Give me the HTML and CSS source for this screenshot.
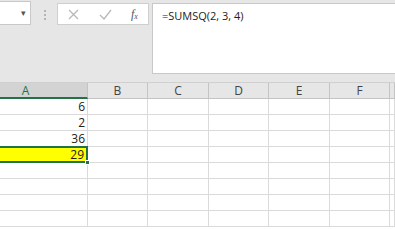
FILE: index.html
```html
<!DOCTYPE html>
<html lang="en">
<head>
  <meta charset="UTF-8">
  <title>SUMSQ</title>
  <link rel="stylesheet" href="styles.css">
</head>
<body>
<div class="toolbar">
  <div class="name-box"><span class="drop">&#9662;</span></div>
  <div class="grip"><i></i><i></i><i></i></div>
  <div class="fx-buttons">
    <svg class="btn-x" width="11" height="11" viewBox="0 0 11 11"><path d="M1 1L10 10M10 1L1 10" stroke="#b8b8b8" stroke-width="1.3" fill="none"/></svg>
    <svg class="btn-ok" width="13" height="11" viewBox="0 0 13 11"><path d="M1 6L5 10L12 1" stroke="#b8b8b8" stroke-width="1.3" fill="none"/></svg>
    <span class="fx">f<sub>x</sub></span>
  </div>
  <div class="formula">=SUMSQ(2, 3, 4)</div>
</div>

<div class="sheet">
  <div class="hdr active">A</div>
  <div class="hdr">B</div>
  <div class="hdr">C</div>
  <div class="hdr">D</div>
  <div class="hdr">E</div>
  <div class="hdr">F</div>
  <div class="hdr"></div>

  <div class="cell num">6</div><div class="cell"></div><div class="cell"></div><div class="cell"></div><div class="cell"></div><div class="cell"></div><div class="cell"></div>
  <div class="cell num">2</div><div class="cell"></div><div class="cell"></div><div class="cell"></div><div class="cell"></div><div class="cell"></div><div class="cell"></div>
  <div class="cell num">36</div><div class="cell"></div><div class="cell"></div><div class="cell"></div><div class="cell"></div><div class="cell"></div><div class="cell"></div>
  <div class="cell num selected">29<span class="handle"></span></div><div class="cell"></div><div class="cell"></div><div class="cell"></div><div class="cell"></div><div class="cell"></div><div class="cell"></div>
  <div class="cell"></div><div class="cell"></div><div class="cell"></div><div class="cell"></div><div class="cell"></div><div class="cell"></div><div class="cell"></div>
  <div class="cell"></div><div class="cell"></div><div class="cell"></div><div class="cell"></div><div class="cell"></div><div class="cell"></div><div class="cell"></div>
  <div class="cell"></div><div class="cell"></div><div class="cell"></div><div class="cell"></div><div class="cell"></div><div class="cell"></div><div class="cell"></div>
  <div class="cell"></div><div class="cell"></div><div class="cell"></div><div class="cell"></div><div class="cell"></div><div class="cell"></div><div class="cell"></div>
</div>
</body>
</html>
```

FILE: styles.css
```css
* {
  margin: 0;
  padding: 0;
  box-sizing: border-box;
}

body {
  font-family: "Open Sans", "Liberation Sans", sans-serif;
  background: #fff;
  overflow: hidden;
  width: 395px;
  height: 229px;
}

/* formula bar */
.toolbar {
  display: flex;
  align-items: flex-start;
  height: 83px;
  background: #e6e6e6;
  border-bottom: 1px solid #d0d0d0;
}

.name-box {
  width: 31px;
  height: 24px;
  margin-top: 1px;
  background: #fff;
  border: 1px solid #c8c8c8;
  border-left: none;
  position: relative;
}

.drop {
  position: absolute;
  right: 4px;
  top: 4px;
  font-size: 9px;
  color: #555;
}

.grip {
  display: flex;
  flex-direction: column;
  gap: 2px;
  margin: 10px 0 0 13px;
}

.grip i {
  display: block;
  width: 2px;
  height: 2px;
  background: #b4b4b4;
}

.fx-buttons {
  display: flex;
  align-items: center;
  width: 92px;
  height: 22px;
  margin: 3px 0 0 11px;
  background: #fff;
  border: 1px solid #cfcfcf;
}

.btn-x {
  margin-left: 10px;
}

.btn-ok {
  margin-left: 20px;
}

.fx {
  margin-left: 19px;
  font-family: "Liberation Serif", serif;
  font-style: italic;
  font-size: 12px;
  color: #555;
}

.fx sub {
  font-size: 8px;
  vertical-align: -1px;
}

.formula {
  flex: 1;
  height: 71px;
  margin: 3px 0 0 3px;
  padding: 4px 9px;
  background: #fff;
  border: 1px solid #c8c8c8;
  border-right: none;
  font-size: 11px;
  color: #222;
}

/* grid */
.sheet {
  display: grid;
  grid-template-columns: 88px 60px 61px 60px 61px 60px 5px;
  grid-auto-rows: 16px;
}

.hdr {
  background: #e6e6e6;
  border-right: 1px solid #c4c4c4;
  border-bottom: 1px solid #c4c4c4;
  text-align: center;
  font-size: 12px;
  line-height: 15px;
  color: #444;
}

.hdr.active {
  padding-right: 36px;
  background: #d3d3d3;
  border-bottom: 2px solid #217346;
  color: #217346;
}

.cell {
  border-right: 1px solid #dadada;
  border-bottom: 1px solid #dadada;
  font-size: 12px;
  line-height: 16px;
  color: #222;
}

.num {
  text-align: right;
  padding-right: 2px;
}

.selected {
  position: relative;
  background: #ffff00;
  border: 2px solid #217346;
  border-left: none;
  margin-top: -1px;
  height: 17px;
  line-height: 14px;
}

.handle {
  position: absolute;
  right: -4px;
  bottom: -4px;
  width: 5px;
  height: 5px;
  background: #217346;
  border: 1px solid #fff;
}
```
